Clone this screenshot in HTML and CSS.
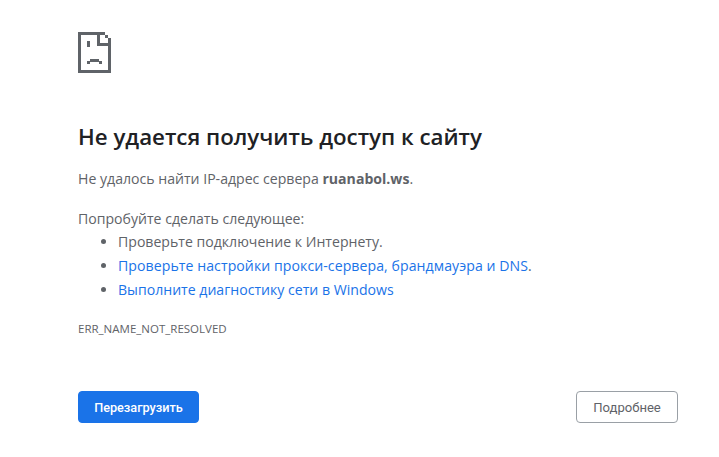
FILE: index.html
```html
<!DOCTYPE html>
<html lang="ru">
  <head>
    <meta charset="UTF-8" />
    <title>ruanabol.ws</title>
    <link rel="stylesheet" href="styles.css">
  </head>
  <body>
    <main class="page">
      <svg class="icon" width="33" height="41" viewBox="0 0 33 41" shape-rendering="crispEdges">
        <path fill="#5f6368" d="M0 0h27v3H3v35h27V6h3v35H0z" />
        <path fill="#5f6368" d="M27 3h3v3h-3zM19 3h3v8h11v3H19z" />
        <path fill="#5f6368" d="M9 9h3v6H9zM9 29h3v3H9zM12 27h9v3h-9zM21 29h3v3h-3z" />
      </svg>
      <h1 class="title">Не удается получить доступ к сайту</h1>
      <p class="summary">Не удалось найти IP-адрес сервера <b>ruanabol.ws</b>.</p>
      <p class="try">Попробуйте сделать следующее:</p>
      <ul class="steps">
        <li>Проверьте подключение к Интернету.</li>
        <li><a class="proxy" href="#">Проверьте настройки прокси-сервера, брандмауэра и DNS</a>.</li>
        <li><a href="#">Выполните диагностику сети в Windows</a></li>
      </ul>
      <p class="code">ERR_NAME_NOT_RESOLVED</p>
      <div class="buttons">
        <button class="btn primary">Перезагрузить</button>
        <button class="btn details">Подробнее</button>
      </div>
    </main>
  </body>
</html>
```

FILE: styles.css
```css
* {
  box-sizing: border-box;
  margin: 0;
  padding: 0;
}
body {
  background: #fff;
  color: #5f6368;
  font-family: "Open Sans", sans-serif;
  font-size: 14.1px;
}
.page {
  padding: 32px 41px 0 78px;
}
.icon {
  display: block;
  margin-bottom: 49px;
}
.title {
  color: #202124;
  font-size: 22.3px;
  font-weight: 600;
  line-height: 30px;
  margin-bottom: 15px;
}
.summary,
.try {
  line-height: 24px;
}
.summary {
  margin-bottom: 16px;
}
.steps {
  padding-left: 40px;
  line-height: 24px;
  margin-top: -1px;
}
a {
  color: #1a73e8;
  text-decoration: none;
}
.proxy {
  letter-spacing: 0.07px;
}
.code {
  font-size: 11.5px;
  line-height: 16px;
  margin-top: 19px;
}
.buttons {
  display: flex;
  justify-content: space-between;
  margin-top: 54px;
}
.btn {
  font-family: Roboto, sans-serif;
  height: 32px;
  border-radius: 4px;
  padding: 0;
}
.primary {
  width: 121px;
  background: #1a73e8;
  border: 1px solid #1a73e8;
  color: #fff;
  font-size: 12.7px;
  font-weight: 500;
}
.details {
  width: 102px;
  background: #fff;
  border: 1px solid #9aa0a6;
  color: #5f6368;
  font-size: 13.1px;
  font-weight: 400;
}
```
